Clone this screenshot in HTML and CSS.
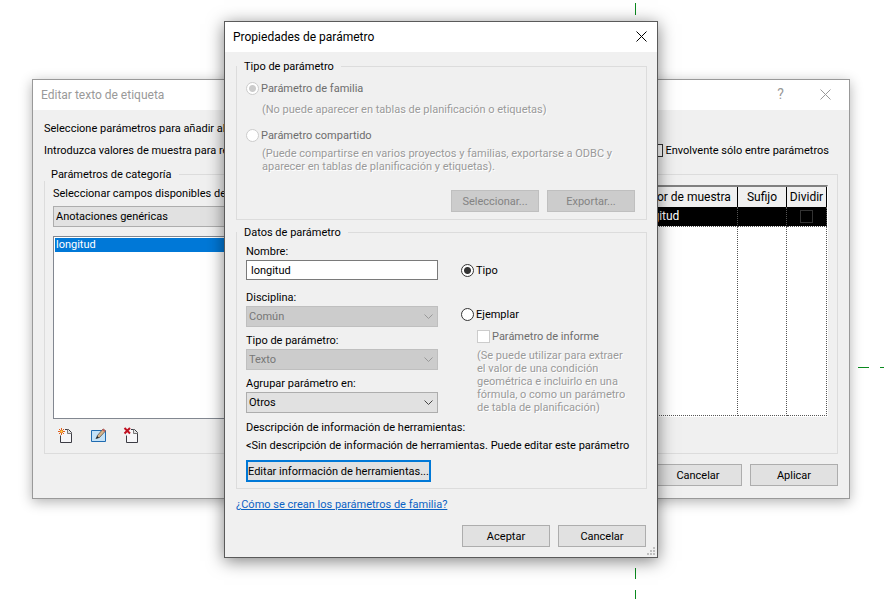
FILE: index.html
```html
<!DOCTYPE html>
<html lang="es">
<head>
    <meta charset="UTF-8">
    <meta name="viewport" content="width=device-width, initial-scale=1.0">
    <title>Propiedades de parámetro</title>
    <link rel="stylesheet" href="styles.css">
</head>
<body>
    <svg class="guides" aria-hidden="true">
        <path d="M635.5 3V15M635.5 568V579M635.5 590V601M858 367.5H869M880 367.5H891"/>
    </svg>

    <section class="window label-window">
        <header class="title-bar">
            <h1>Editar texto de etiqueta</h1>
            <button type="button" class="title-button help" aria-label="Ayuda">?</button>
            <button type="button" class="title-button" aria-label="Cerrar">
                <svg width="11" height="11" viewBox="0 0 11 11"><path d="M.5 .5l10 10M10.5 .5l-10 10" stroke="currentColor"/></svg>
            </button>
        </header>
        <div class="label-body">
            <div class="intro">
                <div>
                    <p>Seleccione parámetros para añadir al texto.</p>
                    <p>Introduzca valores de muestra para reemplazar.</p>
                </div>
                <label class="option"><input type="checkbox"> Envolvente sólo entre parámetros</label>
            </div>
            <div class="panels">
                <fieldset class="category">
                    <legend>Parámetros de categoría</legend>
                    <label for="source">Seleccionar campos disponibles de:</label>
                    <select id="source"><option>Anotaciones genéricas</option></select>
                    <ul class="field-list">
                        <li>longitud</li>
                    </ul>
                    <div class="tools">
                        <button type="button" aria-label="Nuevo parámetro">
                            <svg width="16" height="16" viewBox="0 0 16 16">
                                <path d="M3.5 8.500V15.500H14.500V5.500L11.500 2.500H8" fill="#f6f6f8" stroke="#3c3c44"/>
                                <path d="M10.500 2.500V6.500H14.500" fill="#ddd" stroke="#777"/>
                                <path d="M4.500 1V8M1 4.500H8M2 2L7 7M7 2L2 7" stroke="#e0601e"/>
                                <path d="M3.500 3.500h2v2h-2z" fill="#ffe14a"/>
                            </svg>
                        </button>
                        <button type="button" aria-label="Editar parámetro">
                            <svg width="16" height="16" viewBox="0 0 16 16">
                                <path d="M1.5 3.500H15.500V14.500H1.500z" fill="#c4e2f8" stroke="#1f6bb0"/>
                                <path d="M7 9L13 2L15.500 4L9 11z" fill="#d8b489" stroke="#555" stroke-width=".8"/>
                                <path d="M12 3L13.500 1.500L15.500 3.500L14.500 5z" fill="#c0605d"/>
                                <path d="M5.500 12L7 9L9 11z" fill="#222"/>
                            </svg>
                        </button>
                        <button type="button" aria-label="Eliminar parámetro">
                            <svg width="16" height="16" viewBox="0 0 16 16">
                                <path d="M3.5 8.500V15.500H14.500V5.500L11.500 2.500H8" fill="#f6f6f8" stroke="#3c3c44"/>
                                <path d="M10.500 2.500V6.500H14.500" fill="#ddd" stroke="#777"/>
                                <path d="M1.500 1L7 6.500M7 1L1.500 6.500" stroke="#c01020" stroke-width="2"/>
                            </svg>
                        </button>
                    </div>
                </fieldset>
                <fieldset class="label-params">
                    <legend>Etiqueta</legend>
                    <div class="grid-frame">
                        <table>
                            <thead>
                                <tr><th></th><th class="sample">Valor de muestra</th><th class="suffix">Sufijo</th><th class="split">Dividir</th></tr>
                            </thead>
                            <tbody>
                                <tr class="selected"><td></td><td>longitud</td><td></td><td><input type="checkbox" aria-label="Dividir"></td></tr>
                                <tr class="filler"><td></td><td></td><td></td><td></td></tr>
                            </tbody>
                        </table>
                    </div>
                </fieldset>
            </div>
            <div class="actions">
                <button type="button">Cancelar</button>
                <button type="button">Aplicar</button>
            </div>
        </div>
    </section>

    <section class="window param-window">
        <header class="title-bar">
            <h1>Propiedades de parámetro</h1>
            <button type="button" class="title-button" aria-label="Cerrar">
                <svg width="11" height="11" viewBox="0 0 11 11"><path d="M.5 .5l10 10M10.5 .5l-10 10" stroke="currentColor"/></svg>
            </button>
        </header>
        <form class="param-body">
            <fieldset class="kind">
                <legend>Tipo de parámetro</legend>
                <label class="option disabled"><input type="radio" name="kind" checked disabled> Parámetro de familia</label>
                <p class="hint">(No puede aparecer en tablas de planificación o etiquetas)</p>
                <label class="option disabled"><input type="radio" name="kind" disabled> Parámetro compartido</label>
                <p class="hint">(Puede compartirse en varios proyectos y familias, exportarse a ODBC y<br>aparecer en tablas de planificación y etiquetas).</p>
                <div class="actions">
                    <button type="button" disabled>Seleccionar...</button>
                    <button type="button" disabled>Exportar...</button>
                </div>
            </fieldset>
            <fieldset class="data">
                <legend>Datos de parámetro</legend>
                <div class="columns">
                    <div class="fields">
                        <div class="field name">
                            <label for="name">Nombre:</label>
                            <input type="text" id="name" value="longitud">
                        </div>
                        <div class="field">
                            <label for="discipline">Disciplina:</label>
                            <select id="discipline" disabled><option>Común</option></select>
                        </div>
                        <div class="field">
                            <label for="type">Tipo de parámetro:</label>
                            <select id="type" disabled><option>Texto</option></select>
                        </div>
                        <div class="field">
                            <label for="group">Agrupar parámetro en:</label>
                            <select id="group"><option>Otros</option></select>
                        </div>
                    </div>
                    <div class="scope">
                        <label class="option"><input type="radio" name="scope" checked> Tipo</label>
                        <label class="option instance"><input type="radio" name="scope"> Ejemplar</label>
                        <div class="report">
                            <label class="option disabled"><input type="checkbox" disabled> Parámetro de informe</label>
                            <p class="hint">(Se puede utilizar para extraer<br>el valor de una condición<br>geométrica e incluirlo en una<br>fórmula, o como un parámetro<br>de tabla de planificación)</p>
                        </div>
                    </div>
                </div>
                <p class="tooltip-label">Descripción de información de herramientas:</p>
                <p class="tooltip-text">&lt;Sin descripción de información de herramientas. Puede editar este parámetro</p>
                <button type="button" class="edit-tooltip">Editar información de herramientas...</button>
            </fieldset>
            <a href="#" class="help-link">¿Cómo se crean los parámetros de familia?</a>
            <div class="actions">
                <button type="submit">Aceptar</button>
                <button type="button">Cancelar</button>
            </div>
        </form>
        <svg class="grip" width="8" height="8" viewBox="0 0 8 8" aria-hidden="true">
            <path d="M6 0h2v2H6zM3 3h2v2H3zM6 3h2v2H6zM0 6h2v2H0zM3 6h2v2H3zM6 6h2v2H6z" fill="#bfbfbf"/>
        </svg>
    </section>
</body>
</html>
```

FILE: styles.css
```css
* {
    box-sizing: border-box;
}

body {
    font-family: Tahoma, Roboto, sans-serif;
    font-size: 11px;
    line-height: 13px;
    color: #000;
    background-color: #fff;
    margin: 0;
    min-height: 100vh;
    position: relative;
    overflow: hidden;
}

p, ul, h1 {
    margin: 0;
    padding: 0;
}

button, input, select {
    font: inherit;
    color: inherit;
    margin: 0;
}

.guides {
    position: absolute;
    width: 100%;
    height: 100%;
    stroke: #0a8a1e;
}

/* windows */
.window {
    position: absolute;
    background-color: #f0f0f0;
    border: 1px solid #999;
    box-shadow: 0 3px 12px rgba(0, 0, 0, 0.3);
}

.label-window {
    left: 32px;
    top: 79px;
    width: 818px;
}

.param-window {
    left: 224px;
    top: 21px;
    width: 434px;
    border-color: #5a5a5a;
    box-shadow: 0 3px 16px rgba(0, 0, 0, 0.5);
}

.title-bar {
    display: flex;
    align-items: center;
    height: 30px;
    padding-left: 8px;
    background-color: #fff;
}

.title-bar h1 {
    flex: 1;
    font-size: 12px;
    font-weight: normal;
}

.title-button {
    display: flex;
    align-items: center;
    justify-content: center;
    width: 30px;
    height: 30px;
    padding: 0 1px 1px 0;
    border: none;
    background: none;
}

.label-window .title-bar {
    padding-right: 8px;
    color: #999;
}

.title-button.help {
    margin-right: 15px;
    font-size: 14px;
}

/* controls */
fieldset {
    margin: 0;
    padding: 0 9px;
    border: 1px solid #dcdcdc;
    min-width: 0;
}

legend {
    padding: 0 7px;
    margin-left: -9px;
}

.option {
    display: flex;
    align-items: center;
    gap: 2px;
    height: 14px;
}

.option.disabled {
    color: #6d6d6d;
}

input[type="radio"],
input[type="checkbox"] {
    appearance: none;
    flex: none;
    width: 13px;
    height: 13px;
    border: 1px solid #333;
    background-color: #fff;
}

input[type="radio"] {
    border-radius: 50%;
}

input[type="radio"]:checked {
    background-image: radial-gradient(circle, #333 3px, transparent 4px);
}

input[type="radio"]:disabled,
input[type="checkbox"]:disabled {
    border-color: #ccc;
}

input[type="radio"]:checked:disabled {
    background-image: radial-gradient(circle, #ccc 3px, transparent 4px);
}

select {
    appearance: none;
    width: 100%;
    height: 21px;
    padding: 0 2px;
    border: 1px solid #adadad;
    border-radius: 0;
    background: #e1e1e1 url("data:image/svg+xml,%3Csvg xmlns='http://www.w3.org/2000/svg' width='9' height='6'%3E%3Cpath d='M.5 .5l4 4 4-4' fill='none' stroke='%23444'/%3E%3C/svg%3E") no-repeat right 4px center;
}

select:disabled {
    color: #777;
    opacity: 1;
    border-color: #bfbfbf;
    background-color: #ccc;
    background-image: url("data:image/svg+xml,%3Csvg xmlns='http://www.w3.org/2000/svg' width='9' height='6'%3E%3Cpath d='M.5 .5l4 4 4-4' fill='none' stroke='%23999'/%3E%3C/svg%3E");
}

.hint {
    color: #9a9a9a;
    text-shadow: 1px 1px #fff;
}

.actions {
    display: flex;
    justify-content: flex-end;
    gap: 8px;
}

.actions button {
    width: 88px;
    height: 22px;
    padding: 0;
    border: 1px solid #adadad;
    background-color: #e1e1e1;
}

.actions button:disabled {
    color: #838383;
    border-color: #bfbfbf;
    background-color: #ccc;
}

/* label window */
.label-body {
    padding: 12px 11px;
}

.intro {
    display: flex;
    justify-content: space-between;
    align-items: flex-end;
    padding-right: 9px;
}

.intro p + p {
    margin-top: 9px;
}

.intro .option {
    gap: 3px;
}

.panels {
    display: grid;
    grid-template-columns: 290px 1fr;
    gap: 12px;
    margin: 11px 0 10px;
}

.category {
    display: flex;
    flex-direction: column;
    padding: 6px 8px 10px;
}

.category select {
    margin: 6px 0 9px;
}

.field-list {
    list-style: none;
    height: 183px;
    padding: 1px;
    border: 1px solid #828790;
    background-color: #fff;
}

.field-list li {
    padding: 0 1px;
    line-height: 14px;
    color: #fff;
    background-color: #0078d7;
}

.tools {
    display: flex;
    gap: 17px;
    padding: 8px 4px 0;
}

.tools button {
    width: 16px;
    height: 16px;
    padding: 0;
    border: none;
    background: none;
}

.tools svg {
    display: block;
}

.label-params {
    padding-top: 4px;
}

.grid-frame {
    height: 232px;
    border: 1px solid #fff;
    border-top: 2px solid #808080;
    background-color: #fff;
}

table {
    width: 100%;
    height: 100%;
    table-layout: fixed;
    border-collapse: collapse;
}

th {
    height: 20px;
    padding: 0;
    font-size: 12px;
    font-weight: normal;
    border-right: 1px solid #000;
    background-color: #f0f0f0;
}

.sample {
    width: 104px;
}

.suffix {
    width: 49px;
}

.split {
    width: 40px;
}

td {
    height: 19px;
    padding: 0 2px;
    border-right: 1px dotted #555;
    border-bottom: 1px dotted #555;
}

.selected td {
    color: #fff;
    font-size: 12px;
    background-color: #000;
}

.selected input[type="checkbox"] {
    display: block;
    margin: 0 auto;
    border-color: #333;
    background-color: #000;
}

.filler td {
    height: auto;
}

/* parameter window */
.param-body {
    padding: 8px 10px 10px 11px;
}

.kind {
    padding-top: 8px;
    padding-bottom: 7px;
}

.kind .hint {
    margin: 8px 0 12px;
    padding-left: 16px;
}

.kind .option + .hint ~ .hint {
    margin: 5px 0 17px;
}

.kind .actions {
    padding-right: 2px;
}

.data {
    margin-top: 6px;
    padding-top: 5px;
    padding-bottom: 6px;
}

.columns {
    display: grid;
    grid-template-columns: 192px 1fr;
    gap: 23px;
    margin-bottom: 7px;
}

.field {
    display: flex;
    flex-direction: column;
    gap: 1px;
    margin-bottom: 6px;
    line-height: 15px;
}

.field.name {
    margin-bottom: 10px;
}

.field:last-child {
    margin-bottom: 0;
}

.field input {
    width: 100%;
    height: 20px;
    padding: 0 4px;
    border: 1px solid #7a7a7a;
}

.scope {
    padding-top: 19px;
}

.instance {
    margin-top: 30px;
}

.report {
    padding: 8px 0 0 16px;
}

.report .hint {
    margin-top: 6px;
}

.tooltip-text {
    margin: 5px 0 8px;
    white-space: nowrap;
}

.edit-tooltip {
    display: block;
    height: 22px;
    padding: 0;
    border: 2px solid #0078d7;
    background-color: #e1e1e1;
}

.help-link {
    display: block;
    width: fit-content;
    margin: 9px 0 14px;
    color: #0b62c4;
}

.param-body > .actions {
    padding-right: 1px;
}

.grip {
    position: absolute;
    right: 2px;
    bottom: 2px;
}
```
